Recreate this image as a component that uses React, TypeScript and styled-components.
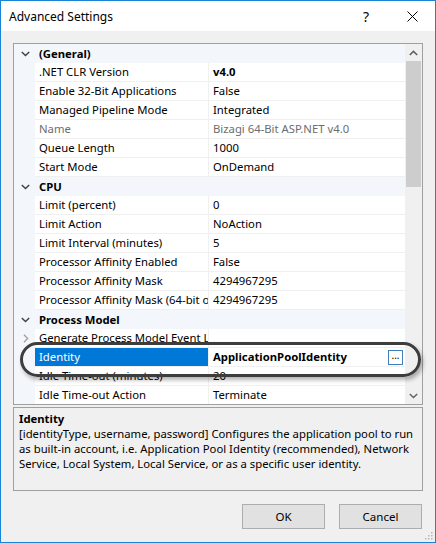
import React from "react";
import styled, { createGlobalStyle } from "styled-components";

const GlobalStyle = createGlobalStyle`
  html, body {
    margin: 0;
    padding: 0;
    background: #ffffff;
  }
  body {
    font-family: "Noto Sans", "Liberation Sans", sans-serif;
    font-size: 11.3px;
    color: #000000;
  }
`;

const Window = styled.div`
  position: relative;
  width: 436px;
  height: 543px;
  box-sizing: border-box;
  border: 1px solid #1883d7;
  background: #f0f0f0;
  display: flex;
  flex-direction: column;
  overflow: hidden;
`;

const TitleBar = styled.div`
  height: 30px;
  background: #ffffff;
  display: flex;
  align-items: center;
`;

const Title = styled.div`
  flex: 1;
  padding-left: 8px;
  font-size: 12px;
  color: #000;
`;

const CaptionButton = styled.div`
  width: 46px;
  height: 30px;
  display: flex;
  align-items: center;
  justify-content: center;
  font-size: 14px;
  color: #000;
`;

const Body = styled.div`
  flex: 1;
  display: flex;
  flex-direction: column;
  padding: 12px 12px 0 12px;
`;

const Grid = styled.div`
  position: relative;
  height: 362px;
  box-sizing: border-box;
  border: 1px solid #a0a0a0;
  display: flex;
  background: #f3f6fb;
`;

const PropertyList = styled.div`
  flex: 1;
  overflow: hidden;
`;

const CategoryRow = styled.div`
  display: grid;
  grid-template-columns: 21px 1fr;
  height: 19px;
  line-height: 19px;
  font-weight: 700;
`;

const Gutter = styled.div`
  display: flex;
  align-items: center;
  justify-content: center;
  padding-left: 2px;
`;

const CategoryLabel = styled.div`
  padding-left: 4px;
`;

const PropRow = styled.div`
  display: grid;
  grid-template-columns: 21px 174px 1fr;
  height: 19px;
  line-height: 18px;
`;

const NameCell = styled.div<{ $selected?: boolean; $disabled?: boolean }>`
  padding-left: 4px;
  white-space: nowrap;
  overflow: hidden;
  box-sizing: border-box;
  border-bottom: 1px solid #f0f0f0;
  border-right: 1px solid #f0f0f0;
  background: ${(p) => (p.$selected ? "#0078d7" : "#ffffff")};
  color: ${(p) => (p.$selected ? "#ffffff" : p.$disabled ? "#6d6d6d" : "#000")};
`;

const ValueCell = styled.div<{ $bold?: boolean; $disabled?: boolean }>`
  display: flex;
  align-items: center;
  padding-left: 4px;
  padding-right: 2px;
  white-space: nowrap;
  overflow: hidden;
  box-sizing: border-box;
  border-bottom: 1px solid #f0f0f0;
  background: #ffffff;
  font-weight: ${(p) => (p.$bold ? 700 : 400)};
  color: ${(p) => (p.$disabled ? "#6d6d6d" : "#000")};
`;

const ValueText = styled.span`
  flex: 1;
`;

const EllipsisButton = styled.div`
  width: 13px;
  height: 13px;
  border: 1px solid #3f7fc0;
  background: #ffffff;
  font-weight: 400;
  font-size: 10px;
  line-height: 9px;
  text-align: center;
  color: #000;
`;

const Scrollbar = styled.div`
  width: 17px;
  background: #f0f0f0;
  display: flex;
  flex-direction: column;
`;

const ScrollArrow = styled.div`
  height: 17px;
  display: flex;
  align-items: center;
  justify-content: center;
`;

const ScrollTrack = styled.div`
  flex: 1;
  padding: 0 1px;
`;

const ScrollThumb = styled.div`
  height: 126px;
  background: #cdcdcd;
`;

const Highlight = styled.div`
  position: absolute;
  left: 6px;
  top: 298px;
  width: 401px;
  height: 35px;
  box-sizing: border-box;
  border: 3px solid #3d3d3d;
  border-radius: 18px;
  box-shadow: 2px 3px 4px rgba(0, 0, 0, 0.3);
  pointer-events: none;
`;

const Description = styled.div`
  margin-top: 2px;
  height: 84px;
  box-sizing: border-box;
  border: 1px solid #a0a0a0;
  padding: 3px 5px;
  line-height: 15px;
`;

const DescTitle = styled.div`
  font-weight: 700;
`;

const ButtonRow = styled.div`
  margin-top: 13px;
  padding-right: 1px;
  display: flex;
  justify-content: flex-end;
  gap: 14px;
`;

const DialogButton = styled.div`
  width: 83px;
  height: 25px;
  box-sizing: border-box;
  border: 1px solid #adadad;
  background: #e1e1e1;
  display: flex;
  align-items: center;
  justify-content: center;
  font-size: 11.5px;
`;

const Grip = styled.svg`
  position: absolute;
  right: 2px;
  bottom: 2px;
`;

const ChevronDown = ({ color = "#404040" }: { color?: string }) => (
  <svg width="9" height="6" viewBox="0 0 9 6">
    <path d="M0.8 1 L4.5 4.6 L8.2 1" fill="none" stroke={color} strokeWidth="1.4" />
  </svg>
);

const ChevronRight = () => (
  <svg width="6" height="9" viewBox="0 0 6 9">
    <path d="M1 0.8 L4.6 4.5 L1 8.2" fill="none" stroke="#a0a0a0" strokeWidth="1.3" />
  </svg>
);

const ChevronUp = () => (
  <svg width="9" height="6" viewBox="0 0 9 6">
    <path d="M0.8 5 L4.5 1.4 L8.2 5" fill="none" stroke="#606060" strokeWidth="1.6" />
  </svg>
);

type Prop = {
  name: string;
  value: string;
  bold?: boolean;
  disabled?: boolean;
  selected?: boolean;
  expandable?: boolean;
};

type Category = { title: string; props: Prop[] };

const categories: Category[] = [
  {
    title: "(General)",
    props: [
      { name: ".NET CLR Version", value: "v4.0", bold: true },
      { name: "Enable 32-Bit Applications", value: "False" },
      { name: "Managed Pipeline Mode", value: "Integrated" },
      { name: "Name", value: "Bizagi 64-Bit ASP.NET v4.0", disabled: true },
      { name: "Queue Length", value: "1000" },
      { name: "Start Mode", value: "OnDemand" },
    ],
  },
  {
    title: "CPU",
    props: [
      { name: "Limit (percent)", value: "0" },
      { name: "Limit Action", value: "NoAction" },
      { name: "Limit Interval (minutes)", value: "5" },
      { name: "Processor Affinity Enabled", value: "False" },
      { name: "Processor Affinity Mask", value: "4294967295" },
      { name: "Processor Affinity Mask (64-bit option)", value: "4294967295" },
    ],
  },
  {
    title: "Process Model",
    props: [
      { name: "Generate Process Model Event Log Entry", value: "", expandable: true },
      { name: "Identity", value: "ApplicationPoolIdentity", bold: true, selected: true },
      { name: "Idle Time-out (minutes)", value: "20" },
      { name: "Idle Time-out Action", value: "Terminate" },
      { name: "Load User Profile", value: "True" },
    ],
  },
];

export default function App() {
  return (
    <>
      <GlobalStyle />
      <Window>
        <TitleBar>
          <Title>Advanced Settings</Title>
          <CaptionButton>?</CaptionButton>
          <CaptionButton>
            <svg width="11" height="11" viewBox="0 0 11 11">
              <path d="M0.5 0.5 L10.5 10.5 M10.5 0.5 L0.5 10.5" stroke="#000" strokeWidth="1" />
            </svg>
          </CaptionButton>
        </TitleBar>
        <Body>
          <Grid>
            <PropertyList>
              {categories.map((cat) => (
                <React.Fragment key={cat.title}>
                  <CategoryRow>
                    <Gutter>
                      <ChevronDown />
                    </Gutter>
                    <CategoryLabel>{cat.title}</CategoryLabel>
                  </CategoryRow>
                  {cat.props.map((p) => (
                    <PropRow key={p.name}>
                      <Gutter>{p.expandable && <ChevronRight />}</Gutter>
                      <NameCell $selected={p.selected} $disabled={p.disabled}>
                        {p.name}
                      </NameCell>
                      <ValueCell $bold={p.bold} $disabled={p.disabled}>
                        <ValueText>{p.value}</ValueText>
                        {p.selected && <EllipsisButton>...</EllipsisButton>}
                      </ValueCell>
                    </PropRow>
                  ))}
                </React.Fragment>
              ))}
            </PropertyList>
            <Scrollbar>
              <ScrollArrow>
                <ChevronUp />
              </ScrollArrow>
              <ScrollTrack>
                <ScrollThumb />
              </ScrollTrack>
              <ScrollArrow>
                <ChevronDown color="#606060" />
              </ScrollArrow>
            </Scrollbar>
            <Highlight />
          </Grid>
          <Description>
            <DescTitle>Identity</DescTitle>
            [identityType, username, password] Configures the application pool to run as
            built-in account, i.e. Application Pool Identity (recommended), Network Service,
            Local System, Local Service, or as a specific user identity.
          </Description>
          <ButtonRow>
            <DialogButton>OK</DialogButton>
            <DialogButton>Cancel</DialogButton>
          </ButtonRow>
        </Body>
        <Grip width="9" height="9" viewBox="0 0 9 9">
          {[
            [7, 1],
            [7, 4],
            [4, 4],
            [7, 7],
            [4, 7],
            [1, 7],
          ].map(([x, y]) => (
            <rect key={`${x}-${y}`} x={x} y={y} width="1.5" height="1.5" fill="#b8b8b8" />
          ))}
        </Grip>
      </Window>
    </>
  );
}
